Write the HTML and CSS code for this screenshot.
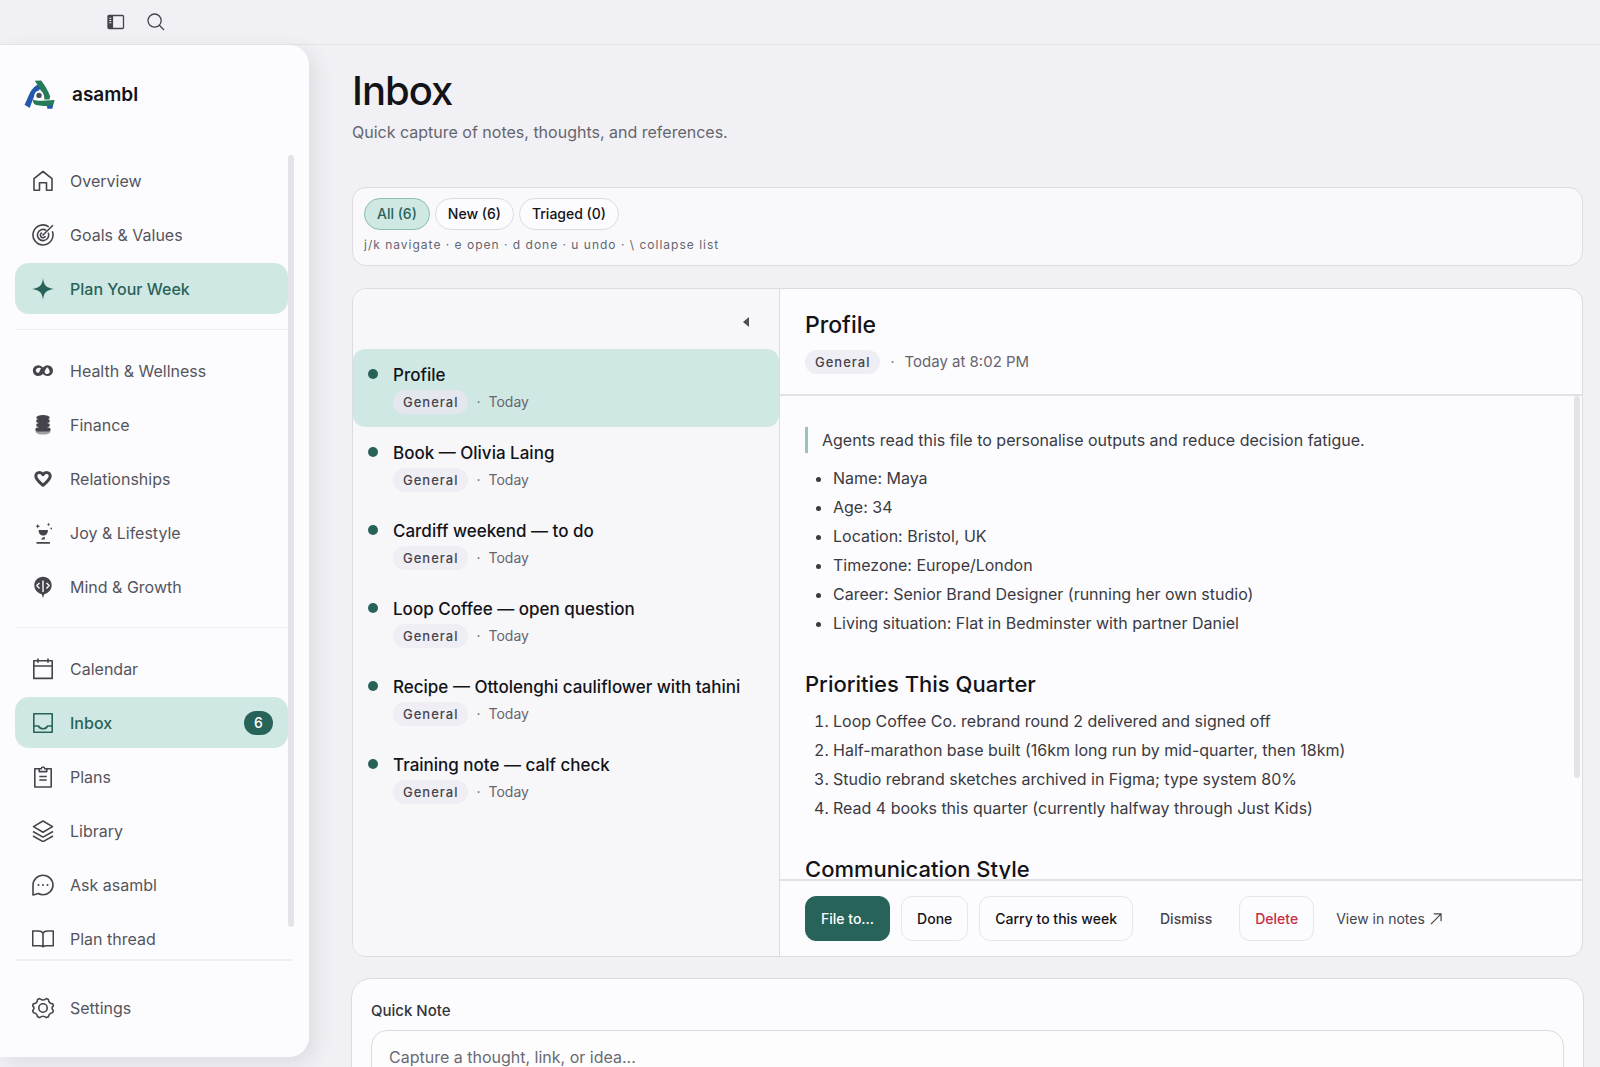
FILE: index.html
```html
<!DOCTYPE html>
<html lang="en">
<head>
<meta charset="utf-8">
<meta name="viewport" content="width=device-width, initial-scale=1">
<title>Inbox – asambl</title>
<link rel="stylesheet" href="styles.css">
</head>
<body>
<div class="app">
  <header class="topbar">
    <button class="icon-button" type="button" aria-label="Toggle sidebar">
      <svg width="18" height="16" viewBox="0 0 18 16" fill="none" stroke="currentColor"><rect x="1" y="1.5" width="15.5" height="13" rx="1" stroke-width="1.3"/><path d="M1 1.5h4.5v13H1z" fill="currentColor" stroke="none"/><path d="M5.5 1.5v13" stroke-width="1.2"/><path d="M2.3 4.3h2M2.3 6.5h2M2.3 8.7h2" stroke="#f1f0f5" stroke-width="1"/></svg>
    </button>
    <button class="icon-button" type="button" aria-label="Search">
      <svg width="18" height="18" viewBox="0 0 18 18" fill="none" stroke="currentColor" stroke-width="1.3"><circle cx="7.6" cy="7.6" r="6.6"/><path d="M12.3 12.3l4.7 4.7"/></svg>
    </button>
  </header>

  <aside class="sidebar">
    <div class="brand">
      <svg class="logo" width="32" height="30" viewBox="0 0 32 30">
        <path d="M12.2 5.4C9 7.6 7 10.200 5.600 13.600L0.600 24.800 5.600 28 9.800 17.200C10.600 14.600 12 12.200 15.200 10.200 16 8.800 16.800 7 16 5.200 14.800 4.600 13.400 4.600 12.200 5.400Z" fill="#2358b0"/>
        <path d="M10.800.8L17.200.600C20.400 5 24.400 11 26.200 16.400L25.400 19.600H20.200C21 16.600 19 13.200 16.600 10.200 15.200 7.400 12.800 4 10.800.8Z" fill="#257a57"/>
        <path d="M9.200 19.600C12 21 14.600 20.800 18 20.800L30.600 20 29 26C22 26 16 26 12 25 9.400 24.200 8.600 22 9.200 19.600Z" fill="#257a57"/>
        <path d="M22.800 25.800L29 25.600 28.400 28.800H23.400Z" fill="#2358b0"/>
        <circle cx="15" cy="15.400" r="4.600" fill="#fcfcfe"/><circle cx="15" cy="15.400" r="2.700" fill="#47505a"/>
      </svg>
      <span>asambl</span>
    </div>

    <div class="nav-scroll">
      <nav class="nav" aria-label="Main">
        <a class="nav-item" href="#"><svg class="icon" viewBox="0 0 22 22"><path d="M2 8.600L11 1.500l9 7.100V20.200h-5.500v-7.400h-7v7.400H2z"/></svg>Overview</a>
        <a class="nav-item" href="#"><svg class="icon" viewBox="0 0 22 22"><path d="M16.800 2.800A10 10 0 1 0 20.300 7.300M14.200 6.400a5.600 5.600 0 1 0 2 2.400M10.500 11.500L21 1.200M10 8.700a2.600 2.600 0 1 0 3.400 3.400"/></svg>Goals &amp; Values</a>
        <a class="nav-item active" href="#"><svg class="icon solid" viewBox="0 0 22 22"><path d="M11 0c.7 7.200 3.200 10 11 11-7.800 1-10.300 3.800-11 11-.7-7.200-3.200-10-11-11C7.800 10 10.300 7.200 11 0z"/></svg>Plan Your Week</a>
        <hr>
        <a class="nav-item" href="#"><svg class="icon solid" viewBox="0 0 22 22"><path fill-rule="evenodd" d="M6.200 5.200c2.200 0 3.600 1.200 4.800 2.400 1.200-1.200 2.600-2.400 4.600-2.400a5.400 5.400 0 1 1 0 10.800c-2 0-3.400-.8-4.600-2-1.200 1.200-2.800 2-4.800 2a5.400 5.400 0 0 1 0-10.800zM7.800 7.700c-2.400-.4-4.200 1.200-3.900 3 .2 1.600 1.600 2.400 2.900 1.800C8.300 11.900 7 9.900 9.300 8.700zM15.300 7.200c-2 2.400-2.900 3.800-2.600 5 .4 1.900 2.800 2.400 4.300 1 1.600-1.600.4-3.800-1.700-6z"/></svg>Health &amp; Wellness</a>
        <a class="nav-item" href="#"><svg class="icon solid" viewBox="0 0 22 22"><ellipse cx="11" cy="17.600" rx="7.600" ry="2.900" opacity=".5"/><ellipse cx="11" cy="3.400" rx="6.600" ry="2.500"/><rect x="4.200" y="5" width="13.600" height="3.800" rx="1.900"/><rect x="4.200" y="9.200" width="13.600" height="3.800" rx="1.900"/><rect x="3.400" y="13.400" width="15.200" height="4.200" rx="2.100"/><path d="M6.500 4h9v11h-9z"/></svg>Finance</a>
        <a class="nav-item" href="#"><svg class="icon heart" viewBox="0 0 22 22"><path d="M11 17.300C7 13.900 3.600 11.200 3.800 8c.2-4 5.200-4.600 7.200-1.200 2-3.400 7-2.800 7.200 1.200.2 3.200-3.200 5.900-7.200 9.300z"/></svg>Relationships</a>
        <a class="nav-item" href="#"><svg class="icon solid" viewBox="0 0 22 22"><path d="M6.500 8h9.500c0 3.400-2 5.300-3.800 5.600h-1.900C8.500 13.300 6.500 11.400 6.500 8zM12.800 14.800v2.800H8.800l1.500-1.800zM4.500 19.900h13.400v1.900H4.500zM5.800 2.100l.7 1.500 1.500.7-1.500.7-.7 1.500-.7-1.500-1.500-.7 1.500-.7zM16.500.6l.5 1.300 1.300.5-1.300.5-.5 1.300-.5-1.300-1.300-.5 1.300-.5zM18.500 5.800h1.500v1.500h-1.500z"/></svg>Joy &amp; Lifestyle</a>
        <a class="nav-item" href="#"><svg class="icon solid" viewBox="0 0 22 22"><path d="M11 .8c5 0 8.700 3.800 8.700 8.400 0 4.500-3.300 7.600-7.500 9L11 22l-1.200-3.800c-4.200-1.400-7.500-4.500-7.500-9C2.300 4.600 6 .8 11 .8z"/><path class="cut" d="M11 4.500v11.500M7.500 7L4.800 9.600l2.700 2.800M14.500 7l2.700 2.600-2.700 2.800"/></svg>Mind &amp; Growth</a>
        <hr>
        <a class="nav-item" href="#"><svg class="icon" viewBox="0 0 22 22"><path d="M1.800 2.800h18.400v17.600H1.800zM1.800 8h18.400M6 .5v4.300M16 .5v4.300"/></svg>Calendar</a>
        <a class="nav-item active" href="#" aria-current="page"><svg class="icon" viewBox="0 0 22 22"><path d="M1.800 1.800h18.400v18.400H1.800zM1.800 14h4.600c1.200 2.200 2.800 2.800 4.600 2.800s3.400-.6 4.600-2.800h4.600"/></svg>Inbox<span class="count">6</span></a>
        <a class="nav-item" href="#"><svg class="icon" viewBox="0 0 22 22"><path d="M7 2.800H2.800V21h16.400V2.800H15M7.200 5.600V2.800h2C9.500.4 12.500.4 12.800 2.800h2v2.800zM7.300 10.500h7.400M7.300 14h7.400"/></svg>Plans</a>
        <a class="nav-item" href="#"><svg class="icon" viewBox="0 0 22 22"><path d="M11 1l9.500 5.600L11 12.200 1.500 6.600zM1 11.500l10 5.600 10-5.600M1 16l10 5.600L21 16"/></svg>Library</a>
        <a class="nav-item" href="#"><svg class="icon" viewBox="0 0 22 22"><path d="M1 21V11A10 9.800 0 1 1 11 20.800c-1.800 0-3.300-.4-4.600-1.300z"/><path class="dots" d="M6.500 11h.01M11 11h.01M15.500 11h.01"/></svg>Ask asambl</a>
        <a class="nav-item" href="#"><svg class="icon" viewBox="0 0 22 22"><path d="M11 5C10 3.500 8.500 3 6.500 3H.7v14.800h6.800c1.700 0 2.900.3 3.500 1 .6-.7 1.800-1 3.500-1h6.800V3h-5.800C13.500 3 12 3.500 11 5zM11 5v13.500"/></svg>Plan thread</a>
      </nav>
      <div class="nav-track" aria-hidden="true"><div class="nav-thumb"></div></div>
    </div>

    <div class="sidebar-foot">
      <a class="nav-item" href="#"><svg class="icon" viewBox="0 0 22 22"><circle cx="11" cy="11" r="4.200"/><path d="M7.600 1.600c1.300.9 1.800 1.400 3.400 1.400s2.100-.5 3.400-1.400l2 .9c.1 1.700.3 2.200 1.300 3.100s1.500 1 3 1.200l.7 2c-1.100 1.200-1.400 1.500-1.400 2.400s.3 1.200 1.400 2.400l-.9 2.200c-1.500.1-1.900.3-2.800 1.200s-1.100 1.400-1.300 2.800l-2 .8c-1.300-1-1.900-1.400-3.400-1.400s-2.100.4-3.400 1.400l-2-.8c-.2-1.400-.4-1.900-1.300-2.800s-1.300-1.100-2.800-1.200l-.9-2.200C1.700 12.400 2 12.100 2 11.200S1.700 10 .6 8.800l.7-2c1.500-.2 2-.3 3-1.200s1.200-1.400 1.300-3.100z"/></svg>Settings</a>
    </div>
  </aside>

  <main class="main">
    <h1>Inbox</h1>
    <p class="lead">Quick capture of notes, thoughts, and references.</p>

    <section class="filters" aria-label="Filters">
      <div class="chips">
        <button class="chip selected" type="button" aria-pressed="true">All (6)</button>
        <button class="chip" type="button">New (6)</button>
        <button class="chip" type="button">Triaged (0)</button>
      </div>
      <p class="hint">j/k navigate · e open · d done · u undo · \ collapse list</p>
    </section>

    <section class="split">
      <div class="list-pane">
        <div class="list-head"><button class="collapse" type="button" aria-label="Collapse list"><svg width="6" height="10" viewBox="0 0 6 10"><path d="M6 0v10L0 5z" fill="currentColor"/></svg></button></div>
        <ul class="notes">
          <li class="note current"><h3>Profile</h3><p class="meta"><span class="tag">General</span><span>·</span><span>Today</span></p></li>
          <li class="note"><h3>Book — Olivia Laing</h3><p class="meta"><span class="tag">General</span><span>·</span><span>Today</span></p></li>
          <li class="note"><h3>Cardiff weekend — to do</h3><p class="meta"><span class="tag">General</span><span>·</span><span>Today</span></p></li>
          <li class="note"><h3>Loop Coffee — open question</h3><p class="meta"><span class="tag">General</span><span>·</span><span>Today</span></p></li>
          <li class="note"><h3>Recipe — Ottolenghi cauliflower with tahini</h3><p class="meta"><span class="tag">General</span><span>·</span><span>Today</span></p></li>
          <li class="note"><h3>Training note — calf check</h3><p class="meta"><span class="tag">General</span><span>·</span><span>Today</span></p></li>
        </ul>
      </div>

      <article class="reader">
        <header class="reader-head">
          <h2>Profile</h2>
          <p class="meta"><span class="tag">General</span><span>·</span><span class="stamp">Today at 8:02 PM</span></p>
        </header>
        <div class="reader-body">
          <div class="prose">
            <blockquote>Agents read this file to personalise outputs and reduce decision fatigue.</blockquote>
            <ul>
              <li>Name: Maya</li>
              <li>Age: 34</li>
              <li>Location: Bristol, UK</li>
              <li>Timezone: Europe/London</li>
              <li>Career: Senior Brand Designer (running her own studio)</li>
              <li>Living situation: Flat in Bedminster with partner Daniel</li>
            </ul>
            <h3>Priorities This Quarter</h3>
            <ol>
              <li>Loop Coffee Co. rebrand round 2 delivered and signed off</li>
              <li>Half-marathon base built (16km long run by mid-quarter, then 18km)</li>
              <li>Studio rebrand sketches archived in Figma; type system 80%</li>
              <li>Read 4 books this quarter (currently halfway through Just Kids)</li>
            </ol>
            <h3>Communication Style</h3>
          </div>
          <div class="body-track" aria-hidden="true"><div class="body-thumb"></div></div>
        </div>
        <footer class="actions">
          <button class="btn primary" type="button">File to...</button>
          <button class="btn" type="button">Done</button>
          <button class="btn" type="button">Carry to this week</button>
          <button class="btn plain" type="button">Dismiss</button>
          <button class="btn danger" type="button">Delete</button>
          <a class="view-link" href="#">View in notes <svg width="12" height="12" viewBox="0 0 13 13" fill="none" stroke="currentColor" stroke-width="1.3"><path d="M1 12L12 1M4 1h8v8"/></svg></a>
        </footer>
      </article>
    </section>

    <section class="quick">
      <label for="quick-note">Quick Note</label>
      <textarea id="quick-note" rows="4" placeholder="Capture a thought, link, or idea..."></textarea>
    </section>
  </main>
</div>
</body>
</html>
```
FILE: styles.css
```css
:root {
  --bg: #f1f0f5;
  --surface: #fcfcfe;
  --line: #dcdbe1;
  --ink: #131318;
  --text: #3a3a41;
  --muted: #65656e;
  --nav: #55555d;
  --green: #28635a;
  --mint: #d0e8e3;
  --tag: #efeef5;
}

* { box-sizing: border-box; }

body, h1, h2, h3, p, ul, ol, blockquote { margin: 0; padding: 0; }

body {
  background: var(--bg);
  color: var(--text);
  font-family: Inter, "Liberation Sans", sans-serif;
  font-size: 16px;
  font-weight: 400;
  line-height: 24px;
}

button, textarea { font: inherit; color: inherit; }
button { cursor: pointer; }
a { color: inherit; text-decoration: none; }
svg { flex: none; }

.app {
  display: grid;
  grid-template-columns: 309px minmax(0, 1fr);
  grid-template-rows: 45px minmax(0, 1fr);
  height: 100vh;
  overflow: hidden;
}

/* Top bar */
.topbar {
  grid-column: 1 / -1;
  display: flex;
  align-items: center;
  gap: 16px;
  padding-left: 104px;
  border-bottom: 1px solid #e6e5ea;
}
.icon-button {
  display: grid;
  place-items: center;
  width: 24px;
  height: 24px;
  padding: 0;
  border: 0;
  background: none;
  color: #44444c;
}

/* Sidebar */
.sidebar {
  display: flex;
  flex-direction: column;
  margin-bottom: 10px;
  background: var(--surface);
  border-radius: 0 20px 20px 0;
  box-shadow: 6px 6px 20px rgba(40, 50, 60, 0.1);
}
.brand {
  display: flex;
  align-items: center;
  gap: 16px;
  height: 110px;
  padding: 0 24px 10px;
  color: var(--ink);
  font-size: 19px;
  font-weight: 600;
}
.nav-scroll {
  display: flex;
  flex: 1;
  min-height: 0;
  padding-left: 15px;
}
.nav {
  display: flex;
  flex: 1;
  flex-direction: column;
  gap: 3px;
  overflow: hidden;
}
.nav hr {
  flex: none;
  height: 1px;
  margin: 12px 0;
  border: 0;
  background: #ededf2;
}
.nav-track { width: 6px; margin-right: 15px; }
.nav-thumb { height: 96%; border-radius: 3px; background: #e4e3e9; }
.nav-item {
  display: flex;
  flex: none;
  align-items: center;
  gap: 15px;
  height: 51px;
  padding: 0 15px 0 16px;
  border-radius: 14px;
  color: var(--nav);
}
.nav-item.active {
  background: var(--mint);
  color: var(--green);
  font-weight: 500;
}
.icon {
  width: 24px;
  height: 24px;
  padding: 1px;
  fill: none;
  stroke: #44444c;
  stroke-width: 1.6;
  stroke-linejoin: round;
}
.active .icon { stroke: var(--green); }
.icon.solid { fill: #44444c; stroke: none; }
.active .icon.solid { fill: var(--green); }
.icon.heart { stroke-width: 3; }
.icon .cut { fill: none; stroke: var(--surface); stroke-width: 1.4; }
.icon .dots { stroke-width: 2; stroke-linecap: round; }
.count {
  min-width: 29px;
  margin-left: auto;
  border-radius: 12px;
  background: var(--green);
  color: #fff;
  font-size: 14px;
  text-align: center;
}
.sidebar-foot {
  margin: 0 16px 0 15px;
  padding: 21px 0 24px;
  border-top: 2px solid #efeef3;
}

/* Page */
.main {
  min-width: 0;
  padding: 22px 17px 0 43px;
  overflow: hidden;
}
h1 {
  color: var(--ink);
  font-size: 40px;
  font-weight: 500;
  line-height: 48px;
  letter-spacing: -1px;
}
.lead {
  margin-top: 4px;
  color: var(--muted);
  line-height: 26px;
}
.filters {
  margin-top: 42px;
  padding: 10px 11px 8px;
  border: 1px solid var(--line);
  border-radius: 14px;
  background: #f9f9fc;
}
.chips { display: flex; gap: 5px; }
.chip {
  height: 32px;
  padding: 0 12px;
  border: 1px solid var(--line);
  border-radius: 16px;
  background: var(--surface);
  color: var(--ink);
  font-size: 14px;
  font-weight: 500;
}
.chip.selected {
  border-color: #8ebdb2;
  background: var(--mint);
  color: var(--green);
}
.hint {
  margin-top: 3px;
  color: var(--muted);
  font-size: 12px;
  letter-spacing: 1px;
}

/* List and reader */
.split {
  display: grid;
  grid-template-columns: 427px minmax(0, 1fr);
  height: 669px;
  margin-top: 22px;
  border: 1px solid var(--line);
  border-radius: 14px;
  background: var(--surface);
  overflow: hidden;
}
.list-pane { border-right: 1px solid var(--line); background: #f7f7fa; }
.list-head {
  display: flex;
  align-items: center;
  justify-content: flex-end;
  height: 60px;
  padding: 6px 21px 0 0;
}
.collapse {
  display: grid;
  place-items: center;
  width: 24px;
  height: 24px;
  padding: 0;
  border: 0;
  background: none;
  color: #505058;
}
.notes { list-style: none; }
.note {
  position: relative;
  height: 78px;
  padding: 14px 16px 0 40px;
  border-radius: 12px;
}
.note::before {
  content: "";
  position: absolute;
  top: 20px;
  left: 15px;
  width: 10px;
  height: 10px;
  border-radius: 50%;
  background: var(--green);
}
.note.current { background: var(--mint); }
.note h3 {
  color: var(--ink);
  font-size: 17px;
  font-weight: 450;
  line-height: 24px;
  white-space: nowrap;
}
.meta {
  display: flex;
  align-items: center;
  gap: 8px;
  color: var(--muted);
  font-size: 14px;
}
.note .meta { margin-top: 3px; }
.tag {
  padding: 0 10px;
  border-radius: 12px;
  background: var(--tag);
  color: #44444c;
  font-size: 13px;
  font-weight: 500;
  letter-spacing: 1px;
}
.current .tag { background: #e4e8ee; }

.reader { display: flex; flex-direction: column; min-width: 0; min-height: 0; }
.reader-head {
  height: 107px;
  padding: 20px 25px 0;
  border-bottom: 2px solid #e2e1e6;
}
.reader-head h2 {
  color: var(--ink);
  font-size: 23px;
  font-weight: 500;
  line-height: 32px;
}
.reader-head .meta { margin-top: 9px; gap: 10px; }
.stamp { font-size: 15px; }
.reader-body { display: flex; flex: 1; min-height: 0; }
.prose {
  flex: 1;
  padding: 31px 25px 0;
  line-height: 29px;
  overflow: hidden;
}
.prose blockquote {
  padding-left: 14px;
  border-left: 3px solid #9cc3ba;
  line-height: 26px;
}
.prose ul, .prose ol { padding-left: 28px; }
.prose ul { margin-top: 11px; }
.prose h3 {
  margin-top: 28px;
  color: var(--ink);
  font-size: 22px;
  font-weight: 500;
  line-height: 36px;
}
.prose ol { margin-top: 5px; }
.body-track { width: 8px; }
.body-thumb { width: 6px; height: 79%; border-radius: 3px; background: #e4e3e9; }

.actions {
  display: flex;
  align-items: center;
  gap: 11px;
  height: 77px;
  padding: 0 25px;
  border-top: 2px solid #e2e1e6;
}
.btn {
  height: 45px;
  padding: 0 15px;
  border: 1px solid #e6e5eb;
  border-radius: 11px;
  background: var(--surface);
  color: var(--ink);
  font-size: 14px;
  font-weight: 500;
}
.btn.primary { border-color: var(--green); background: var(--green); color: #fff; }
.btn.plain { border-color: transparent; background: none; color: #44444c; }
.btn.danger { color: #c62f44; }
.view-link {
  display: flex;
  align-items: center;
  gap: 5px;
  padding-left: 11px;
  color: #44444c;
  font-size: 14px;
}

/* Quick note */
.quick {
  margin: 21px -1px 0;
  padding: 20px 19px;
  border: 1px solid var(--line);
  border-radius: 20px;
  background: var(--surface);
}
.quick label {
  display: block;
  color: #34343b;
  font-size: 15px;
  font-weight: 500;
}
.quick textarea {
  display: block;
  width: 100%;
  margin-top: 7px;
  padding: 14px 17px;
  border: 1px solid var(--line);
  border-radius: 16px;
  background: #fdfdfe;
  resize: none;
}
.quick textarea::placeholder { color: #6a6a73; opacity: 1; }
```
